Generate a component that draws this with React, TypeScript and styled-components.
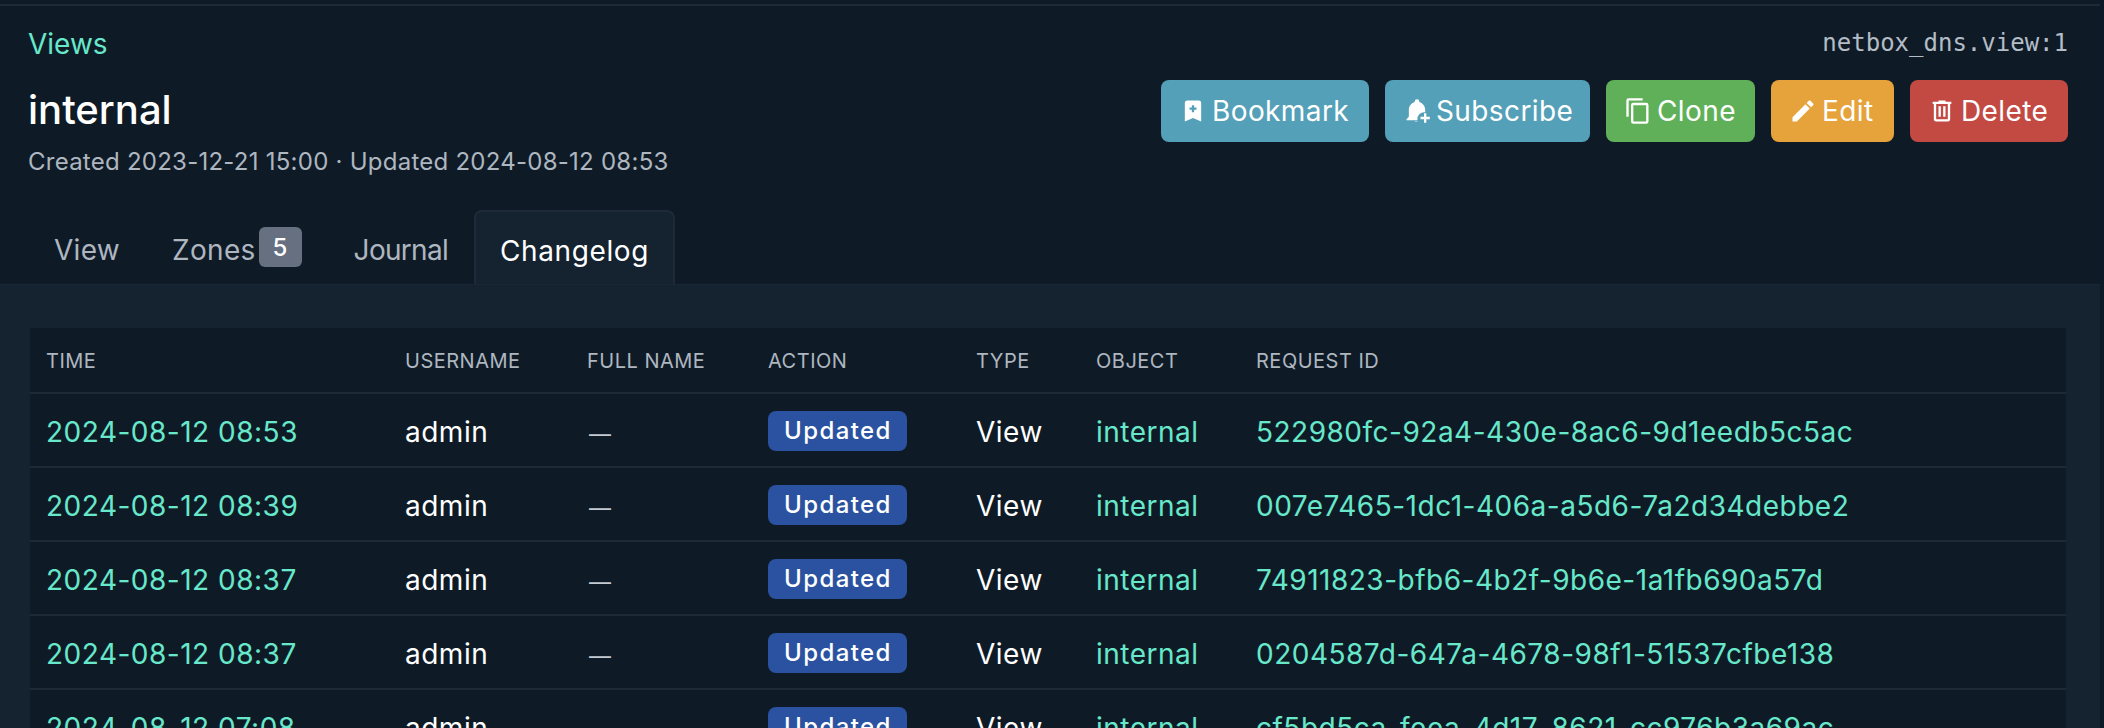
import React from 'react'
import styled, { createGlobalStyle } from 'styled-components'

const GlobalStyle = createGlobalStyle`
  html, body {
    margin: 0;
    height: 728px;
    overflow: hidden;
    background: #0c1a28;
    font-family: Inter, 'Noto Sans', sans-serif;
  }
`

const mdi = {
  bookmark: 'M17,3A2,2 0 0,1 19,5V21L12,18L5,21V5C5,3.89 5.9,3 7,3H17M11,7V9H9V11H11V13H13V11H15V9H13V7H11Z',
  bell: 'M12,2A2,2 0 0,1 14,4V4.29C16.97,5.17 19,7.9 19,11V13.1A6,6 0 0,0 12.3,20H3V19L5,17V11C5,7.9 7.03,5.17 10,4.29V4A2,2 0 0,1 12,2M10,21H12.5A2,2 0 0,1 10,21M18,14H20V17H23V19H20V22H18V19H15V17H18V14Z',
  copy: 'M19,21H8V7H19M19,5H8A2,2 0 0,0 6,7V21A2,2 0 0,0 8,23H19A2,2 0 0,0 21,21V7A2,2 0 0,0 19,5M16,1H4A2,2 0 0,0 2,3V17H4V3H16V1Z',
  pencil: 'M20.71,7.04C21.1,6.65 21.1,6 20.71,5.63L18.37,3.29C18,2.9 17.35,2.9 16.96,3.29L15.12,5.12L18.87,8.87M3,17.25V21H6.75L17.81,9.93L14.06,6.18L3,17.25Z',
  trash: 'M9,3V4H4V6H5V19A2,2 0 0,0 7,21H17A2,2 0 0,0 19,19V6H20V4H15V3H9M7,6H17V19H7V6M9,8V17H11V8H9M13,8V17H15V8H13Z',
}

const buttons = [
  { label: 'Bookmark', icon: mdi.bookmark, color: '#54a0b8', width: 208 },
  { label: 'Subscribe', icon: mdi.bell, color: '#54a0b8', width: 205 },
  { label: 'Clone', icon: mdi.copy, color: '#60b059', width: 149 },
  { label: 'Edit', icon: mdi.pencil, color: '#e6a23b', width: 123 },
  { label: 'Delete', icon: mdi.trash, color: '#c24a43', width: 158 },
]

const rows = [
  ['2024-08-12 08:53', '522980fc-92a4-430e-8ac6-9d1eedb5c5ac'],
  ['2024-08-12 08:39', '007e7465-1dc1-406a-a5d6-7a2d34debbe2'],
  ['2024-08-12 08:37', '74911823-bfb6-4b2f-9b6e-1a1fb690a57d'],
  ['2024-08-12 08:37', '0204587d-647a-4678-98f1-51537cfbe138'],
  ['2024-08-12 07:08', 'cf5bd5ca-feea-4d17-8621-cc976b3a69ac'],
]

const columns = ['Time', 'Username', 'Full Name', 'Action', 'Type', 'Object', 'Request ID']
const columnWidths = [359, 182, 181, 208, 120, 160, 826]

const App = () => (
  <Page>
    <GlobalStyle />
    <Main>
      <TopRule />
      <Header>
        <HeaderTop>
          <Breadcrumb href="#">Views</Breadcrumb>
          <ObjectId>netbox_dns.view:1</ObjectId>
        </HeaderTop>
        <HeaderMain>
          <div>
            <Title>internal</Title>
            <Meta>Created 2023-12-21 15:00 · Updated 2024-08-12 08:53</Meta>
          </div>
          <Actions>
            {buttons.map((b) => (
              <ActionButton key={b.label} $color={b.color} $width={b.width}>
                <svg viewBox="0 0 24 24" width="28" height="28" fill="#fff">
                  <path d={b.icon} />
                </svg>
                {b.label}
              </ActionButton>
            ))}
          </Actions>
        </HeaderMain>
        <Tabs>
          <Tab>View</Tab>
          <Tab>
            Zones<Count>5</Count>
          </Tab>
          <Tab $spacing={-0.7}>Journal</Tab>
          <ActiveTab $spacing={0.6}>Changelog</ActiveTab>
        </Tabs>
      </Header>
      <Content>
        <Table>
          <colgroup>
            {columnWidths.map((w, i) => (
              <col key={i} width={w} />
            ))}
          </colgroup>
          <thead>
            <tr>
              {columns.map((c) => (
                <Th key={c}>{c}</Th>
              ))}
            </tr>
          </thead>
          <tbody>
            {rows.map(([time, id], i) => (
              <tr key={i}>
                <Td><Link href="#">{time}</Link></Td>
                <Td>admin</Td>
                <Td><Muted>—</Muted></Td>
                <Td><Badge>Updated</Badge></Td>
                <Td>View</Td>
                <Td><Link href="#">internal</Link></Td>
                <Td><Link href="#">{id}</Link></Td>
              </tr>
            ))}
          </tbody>
        </Table>
      </Content>
    </Main>
  </Page>
)

const Page = styled.div`
  height: 728px;
  overflow: hidden;
  padding-right: 4px;
  background: #0c1a28;
`

const Main = styled.div`
  height: 728px;
  overflow: hidden;
  background: #152230;
  display: flex;
  flex-direction: column;
`

const TopRule = styled.div`
  height: 4px;
  background: #0e1b26;
  border-bottom: 2px solid #1f2a38;
  flex: none;
`

const Header = styled.header`
  flex: none;
  height: 278px;
  box-sizing: border-box;
  background: #0e1b26;
  padding: 0 32px 0 28px;
  display: flex;
  flex-direction: column;
`

const HeaderTop = styled.div`
  display: flex;
  justify-content: space-between;
  align-items: center;
  height: 74px;
`

const Breadcrumb = styled.a`
  color: #68e8cb;
  font-size: 28px;
  padding-top: 2px;
  text-decoration: none;
`

const ObjectId = styled.span`
  font-family: 'DejaVu Sans Mono', monospace;
  font-size: 24px;
  color: #b4bcc6;
`

const HeaderMain = styled.div`
  display: flex;
  justify-content: space-between;
  align-items: flex-start;
`

const Title = styled.h1`
  margin: 5px 0 0;
  font-size: 40px;
  line-height: 50px;
  font-weight: 500;
  color: #fff;
`

const Meta = styled.div`
  margin-top: 11px;
  font-size: 24px;
  line-height: 32px;
  letter-spacing: 0.25px;
  color: #aeb6c0;
`

const Actions = styled.div`
  display: flex;
  gap: 16px;
`

const ActionButton = styled.button<{ $color: string; $width: number }>`
  width: ${(p) => p.$width}px;
  height: 62px;
  border: none;
  border-radius: 8px;
  background: ${(p) => p.$color};
  color: #fff;
  font: 400 28px Inter, sans-serif;
  letter-spacing: 0.4px;
  display: flex;
  align-items: center;
  gap: 5px;
  padding: 0 0 0 18px;
`

const Tabs = styled.nav`
  display: flex;
  margin-top: auto;
  height: 74px;
`

const Tab = styled.div<{ $spacing?: number }>`
  display: flex;
  align-items: center;
  padding: 6px 26px 0;
  font-size: 28px;
  letter-spacing: ${(p) => p.$spacing ?? 0.3}px;
  color: #aeb6c0;
`

const ActiveTab = styled(Tab)`
  background: #152230;
  color: #fff;
  border: 2px solid #1f2a38;
  border-bottom: none;
  border-radius: 8px 8px 0 0;
  padding: 6px 24px 0;
`

const Count = styled.span`
  margin: 0 0 6px 3px;
  width: 43px;
  height: 40px;
  border-radius: 6px;
  background: #667080;
  color: #fff;
  font-size: 24px;
  font-weight: 500;
  display: flex;
  align-items: center;
  justify-content: center;
`

const Content = styled.main`
  flex: 1;
  border-top: 1px solid #192735;
  padding: 43px 34px 0 30px;
`

const Table = styled.table`
  width: 2036px;
  table-layout: fixed;
  border-collapse: collapse;
  background: #0e1b26;
`

const Th = styled.th`
  height: 62px;
  padding: 2px 16px 0;
  text-align: left;
  font-size: 20px;
  font-weight: 400;
  letter-spacing: 0.5px;
  text-transform: uppercase;
  color: #aeb6c0;
  border-bottom: 2px solid #1f2a38;
`

const Td = styled.td`
  height: 68px;
  padding: 4px 16px 0;
  font-size: 28px;
  letter-spacing: 0.5px;
  color: #fff;
  border-bottom: 2px solid #1f2a38;
  white-space: nowrap;
`

const Link = styled.a`
  color: #68e8cb;
  text-decoration: none;
`

const Muted = styled.span`
  color: #c4cad2;
  font-size: 22px;
  padding-left: 2px;
`

const Badge = styled.span`
  display: inline-flex;
  align-items: center;
  height: 40px;
  padding: 0 15px 0 16px;
  border-radius: 8px;
  background: #2a52a0;
  color: #fff;
  font-size: 24px;
  font-weight: 500;
  letter-spacing: 1.4px;
  vertical-align: 7px;
`

export default App
